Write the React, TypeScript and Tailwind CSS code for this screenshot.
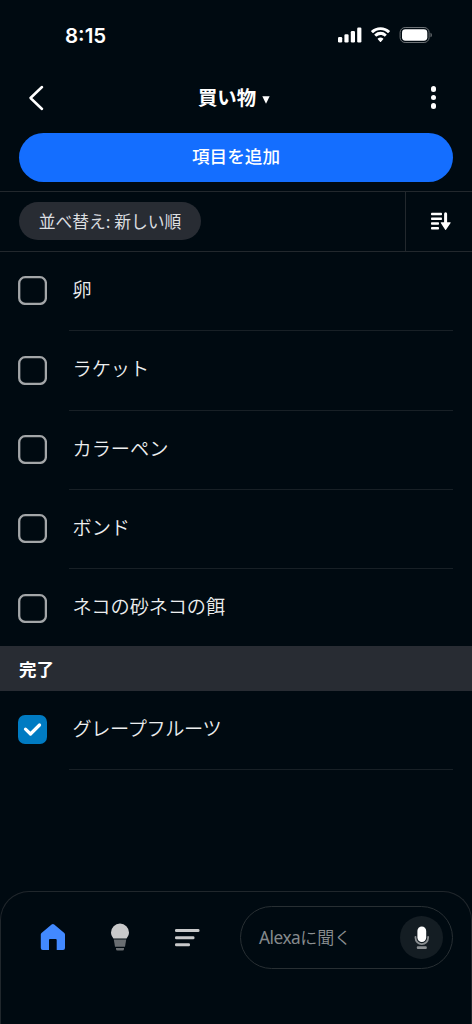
import React, { useState } from 'react';

interface Item {
  id: number;
  name: string;
  done: boolean;
}

const initialItems: Item[] = [
  { id: 1, name: '卵', done: false },
  { id: 2, name: 'ラケット', done: false },
  { id: 3, name: 'カラーペン', done: false },
  { id: 4, name: 'ボンド', done: false },
  { id: 5, name: 'ネコの砂ネコの餌', done: false },
  { id: 6, name: 'グレープフルーツ', done: true },
];

const StatusBar = () => (
  <div className="flex h-[70px] items-center justify-between pl-[65px] pr-[39px]">
    <span className="pt-[2px] font-['Inter',sans-serif] text-[20.5px] font-semibold leading-none">8:15</span>
    <div className="flex items-center">
      <svg width="25" height="16" viewBox="0 0 25 16" fill="currentColor">
        <rect x="1" y="10" width="4.2" height="5.5" rx="1.2" />
        <rect x="7.4" y="7.3" width="4.2" height="8.2" rx="1.2" />
        <rect x="13.8" y="4" width="4.2" height="11.5" rx="1.2" />
        <rect x="20.2" y="0.5" width="4.2" height="15" rx="1.2" />
      </svg>
      <svg className="ml-2" width="21" height="16" viewBox="0 0 21 16" fill="currentColor">
        <path d="M10.5 3.1c2.8 0 5.3 1.1 7.2 2.9.2.2.4.2.6 0l1.5-1.5c.2-.2.2-.5 0-.7C17.3 1.5 14.1.3 10.5.3S3.7 1.5 1.2 3.8c-.2.2-.2.5 0 .7L2.7 6c.2.2.4.2.6 0 1.9-1.8 4.4-2.9 7.2-2.9z" />
        <path d="M10.5 8c1.5 0 2.8.5 3.9 1.5.2.2.4.2.6 0l1.5-1.6c.2-.2.2-.5 0-.7a8.8 8.8 0 0 0-12 0c-.2.2-.2.5 0 .7L6 9.5c.2.2.4.2.6 0A5.7 5.7 0 0 1 10.5 8z" />
        <path d="M13.2 12.3c.2-.2.2-.5 0-.7a4.2 4.2 0 0 0-5.4 0c-.2.2-.2.5 0 .7l2.4 2.6c.2.2.4.2.6 0z" />
      </svg>
      <svg className="ml-2" width="34" height="16" viewBox="0 0 34 16">
        <rect x="1.1" y="0.5" width="29" height="15" rx="5" fill="none" stroke="#6d7276" />
        <rect x="3" y="2.3" width="25.3" height="11.4" rx="3.4" fill="white" />
        <path d="M31.5 5.7c1.8.7 1.8 3.9 0 4.6z" fill="#6d7276" />
      </svg>
    </div>
  </div>
);

const Header = () => (
  <header className="flex h-[63px] items-center justify-between pb-2 pl-[27px] pr-[28px]">
    <button aria-label="back">
      <svg width="18" height="26" viewBox="0 0 18 26" fill="none" stroke="currentColor" strokeWidth="2.5" strokeLinecap="round" strokeLinejoin="round">
        <path d="M15 2L3.5 13L15 24" />
      </svg>
    </button>
    <button className="flex items-center gap-[6px] pb-px text-[19.4px] font-bold leading-none">
      買い物
      <svg className="mt-[5px]" width="8" height="8" viewBox="0 0 8 8" fill="currentColor">
        <path d="M0.3 0.3h7.4L4 7.8z" />
      </svg>
    </button>
    <button aria-label="menu" className="flex w-[21px] flex-col items-center gap-[3px]">
      <span className="size-[5.5px] rounded-full bg-white" />
      <span className="size-[5.5px] rounded-full bg-white" />
      <span className="size-[5.5px] rounded-full bg-white" />
    </button>
  </header>
);

const ItemRow = ({ item, onToggle }: { item: Item; onToggle: (id: number) => void }) => (
  <li className="flex h-[79.3px] shrink-0 pl-[18px] pr-[19px] group-[.last]:h-[77.3px]">
    <button onClick={() => onToggle(item.id)} aria-label={item.name} className="mt-[24.4px] size-[29px] shrink-0">
      {item.done ? (
        <span className="flex size-[29px] items-center justify-center rounded-[7px] bg-[#007bc2]">
          <svg width="19" height="15" viewBox="0 0 19 15" fill="none" stroke="white" strokeWidth="3.2" strokeLinecap="round" strokeLinejoin="round">
            <path d="M2.5 7.2L7.5 12L16.5 3" />
          </svg>
        </span>
      ) : (
        <svg className="block" width="29" height="29" viewBox="0 0 29 29" fill="none" stroke="#a3a6a8" strokeWidth="2.3">
          <rect x="1.2" y="1.2" width="26.7" height="26.7" rx="6" />
        </svg>
      )}
    </button>
    <div
      className={`ml-[22px] flex-1 border-b border-[#182026] pl-[3.5px] pt-[22px] text-[19.2px] font-[350] leading-[30px] text-[#eceeef] group-[.last]:border-transparent ${
        item.done ? 'tracking-[-0.4px]' : ''
      }`}
    >
      {item.name}
    </div>
  </li>
);

const BottomNav = () => (
  <nav className="mt-auto flex h-[133px] items-start rounded-t-[29px] border border-b-0 border-[#20272c] pl-[39px] pr-[18px] pt-[14px]">
    <div className="flex h-[62px] items-center">
      <svg width="26" height="28" viewBox="0 0 26 28" fill="#4289ff">
        <path d="M11.6 1.6a1.9 1.9 0 0 1 2.6 0L24.3 10.1a2 2 0 0 1 .7 1.5V25a2 2 0 0 1-2 2H16.7V17a1 1 0 0 0-1-1H10a1 1 0 0 0-1 1V27H2.8a2 2 0 0 1-2-2V11.6a2 2 0 0 1 .7-1.5z" />
      </svg>
      <svg className="ml-[44px]" width="20" height="28" viewBox="0 0 20 28">
        <path d="M10 .6A9 9 0 0 0 1 9.6c0 2.5 1.2 4.1 2.4 5.8H16.6c1.2-1.7 2.4-3.3 2.4-5.8A9 9 0 0 0 10 .6z" fill="#c8c9ca" />
        <path d="M3.8 16.4H16.2L15 23.7H5z" fill="#696e72" />
        <path d="M6 25H14v1a1.5 1.5 0 0 1-1.5 1.5h-5A1.5 1.5 0 0 1 6 26z" fill="#696e72" />
      </svg>
      <svg className="ml-[44px] mt-[2px]" width="26" height="18" viewBox="0 0 26 18" fill="#c8c9ca">
        <rect x="1" y="0" width="24.5" height="3" rx="1.3" />
        <rect x="1" y="7.2" width="19.5" height="3" rx="1.3" />
        <rect x="1" y="14.3" width="15" height="3" rx="1.3" />
      </svg>
    </div>
    <div className="ml-auto flex h-[63px] w-[213px] items-center justify-between rounded-full border border-[#282f33] pl-[18px] pr-[9px]">
      <span className="text-[17px] font-[350] text-[#8b8f92]">
        <span className="font-['Noto_Sans','Open_Sans',sans-serif] text-[17.3px] font-normal tracking-[-0.5px] text-[#85898c]">Alexa</span>に聞く
      </span>
      <button aria-label="mic" className="flex size-[43px] items-center justify-center rounded-full bg-[#141d23]">
        <svg width="16" height="24" viewBox="0 0 16 24">
          <rect x="3.4" y="0.5" width="8.8" height="15.5" rx="4.4" fill="white" />
          <path d="M1.5 10.8v1a6.3 6.3 0 0 0 12.6 0v-1" fill="none" stroke="#8b8f92" strokeWidth="1.8" strokeLinecap="round" />
          <rect x="2.8" y="20.3" width="10" height="2.6" rx="1" fill="#8b8f92" />
        </svg>
      </button>
    </div>
  </nav>
);

const App = () => {
  const [items, setItems] = useState<Item[]>(initialItems);

  const toggle = (id: number) => {
    setItems(prev => prev.map(i => (i.id === id ? { ...i, done: !i.done } : i)));
  };

  const open = items.filter(i => !i.done);
  const done = items.filter(i => i.done);

  return (
    <div className="flex h-[1024px] w-[472px] flex-col overflow-hidden bg-[#000a11] font-['Noto_Sans_CJK_JP',sans-serif] text-white">
      <StatusBar />
      <Header />

      <button className="mx-[19px] flex h-[48.5px] shrink-0 items-center justify-center rounded-full bg-[#146eff] pb-[2px] text-[17.6px] font-medium leading-none">
        項目を追加
      </button>

      <div className="mt-[9.5px] flex h-[61px] shrink-0 border-y border-[#22282d]">
        <div className="flex flex-1 items-center pb-px pl-[19px]">
          <button className="flex h-[38px] w-[182px] items-center justify-center whitespace-nowrap rounded-full bg-[#282c33] text-[16.8px] leading-none text-[#dcdee0]">
            並べ替え: 新しい順
          </button>
        </div>
        <button aria-label="sort" className="flex w-[67px] items-center justify-center border-l border-[#22282d] pl-1">
          <svg width="20" height="19" viewBox="0 0 20 19" fill="currentColor">
            <rect x="0" y="0.7" width="11" height="2.6" rx="0.8" />
            <rect x="0" y="5.4" width="11" height="2.6" rx="0.8" />
            <rect x="0" y="10.2" width="8" height="2.6" rx="0.8" />
            <rect x="0" y="15" width="8" height="2.6" rx="0.8" />
            <path d="M13.1 1.7a1.5 1.5 0 0 1 3 0V10.2H19.2a.5.5 0 0 1 .4.8L15 17.8a.5.5 0 0 1-.8 0L9.8 11a.5.5 0 0 1 .4-.8H13.1z" />
          </svg>
        </button>
      </div>

      <ul className="flex flex-col">
        {open.map((item, index) => (
          <div key={item.id} className={index === open.length - 1 ? 'group last' : ''}>
            <ItemRow item={item} onToggle={toggle} />
          </div>
        ))}
      </ul>

      <h2 className="flex h-[44.5px] shrink-0 items-center bg-[#282c33] pl-[19px] text-[17.5px] font-bold leading-none">
        完了
      </h2>
      <ul className="flex flex-col">
        {done.map(item => (
          <ItemRow key={item.id} item={item} onToggle={toggle} />
        ))}
      </ul>

      <BottomNav />
    </div>
  );
};

export default App;
